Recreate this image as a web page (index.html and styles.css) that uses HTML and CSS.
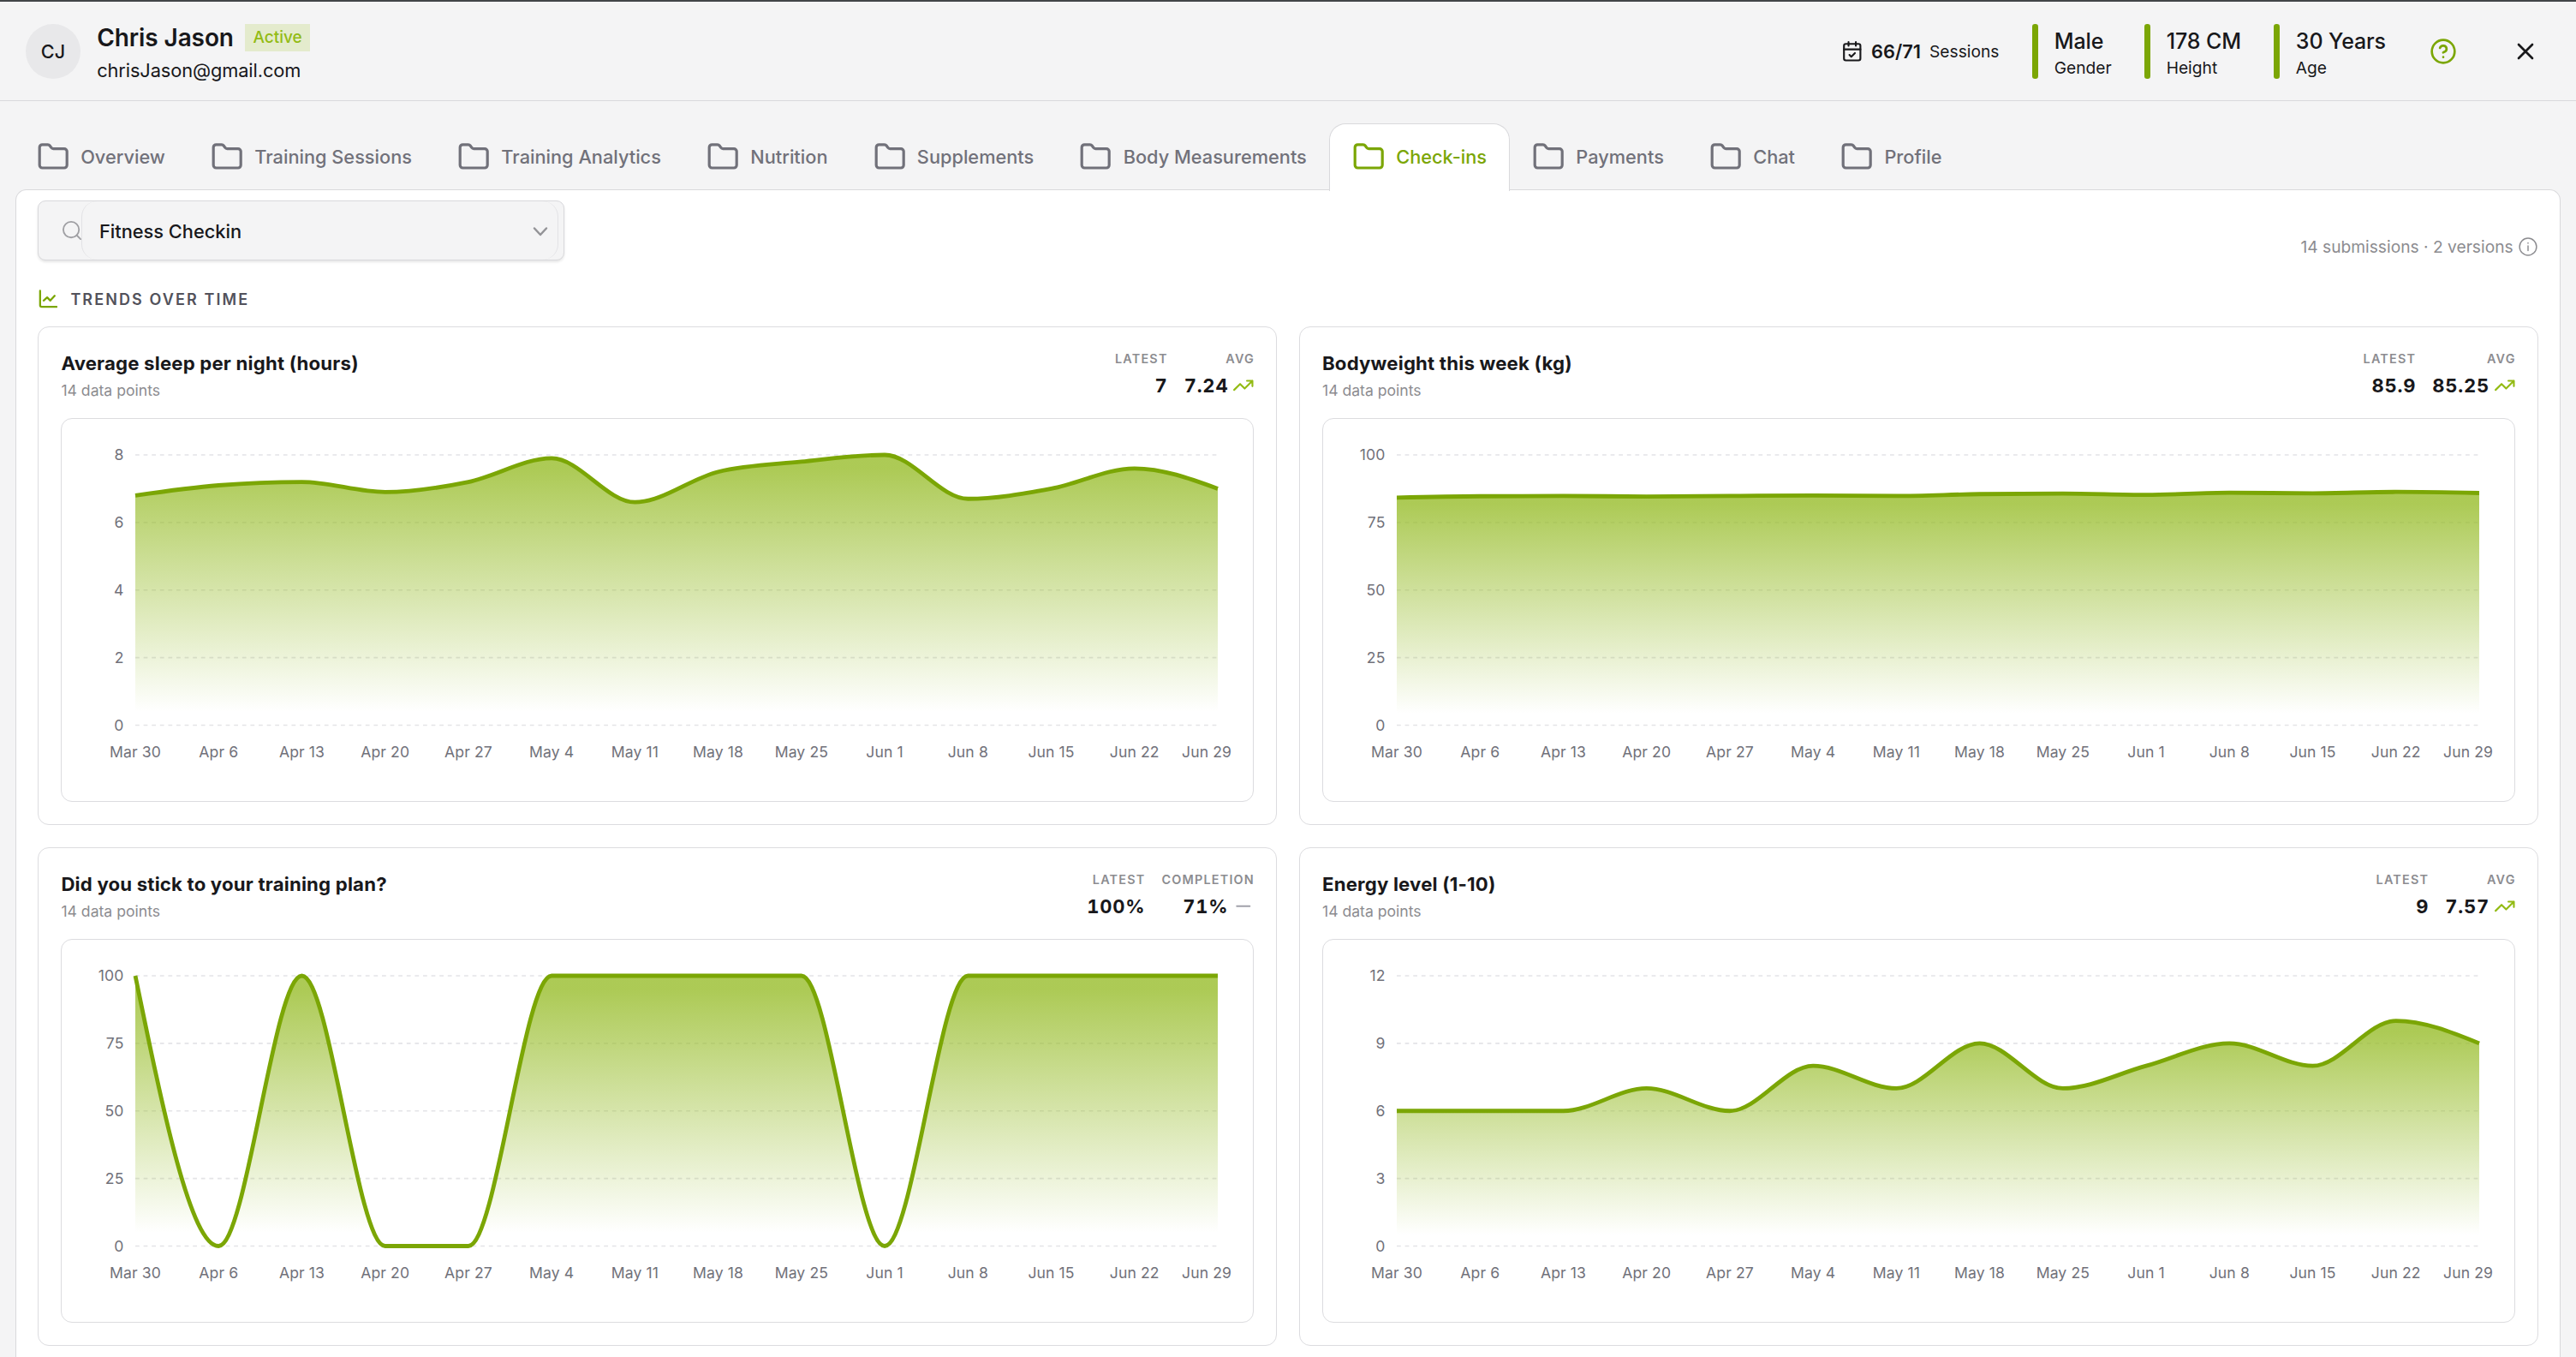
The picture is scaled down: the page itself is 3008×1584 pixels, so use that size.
FILE: index.html
```html
<!DOCTYPE html>
<html lang="en">
<head>
<meta charset="utf-8">
<title>Client check-ins</title>
<link rel="stylesheet" href="styles.css">
</head>
<body>
<svg class="sprite" aria-hidden="true">
  <symbol id="folder" viewBox="0 0 24 24"><path d="M20 20a2 2 0 0 0 2-2V8a2 2 0 0 0-2-2h-7.9a2 2 0 0 1-1.69-.9L9.6 3.9A2 2 0 0 0 7.93 3H4a2 2 0 0 0-2 2v13a2 2 0 0 0 2 2Z"/></symbol>
  <symbol id="trend" viewBox="0 0 24 24"><path d="M22 7l-8.500 8.500-5-5L2 17M16 7h6v6"/></symbol>
  <symbol id="minus" viewBox="0 0 24 24"><path d="M5 12h14"/></symbol>
</svg>

<header class="topbar">
  <div class="avatar">CJ</div>
  <div class="person">
    <div class="person-row"><span class="name">Chris Jason</span><span class="badge">Active</span></div>
    <div class="email">chrisJason@gmail.com</div>
  </div>
  <div class="sessions">
    <svg class="icon" viewBox="0 0 24 24"><path d="M8 2v4M16 2v4M3 10h18M9 16l2 2 4-4"/><rect x="3" y="4" width="18" height="18" rx="2"/></svg>
    <b>66/71</b><span>Sessions</span>
  </div>
  <div class="facts">
    <div class="fact"><i></i><div><b>Male</b><span>Gender</span></div></div>
    <div class="fact"><i></i><div><b>178 CM</b><span>Height</span></div></div>
    <div class="fact"><i></i><div><b>30 Years</b><span>Age</span></div></div>
  </div>
  <svg class="icon help" viewBox="0 0 24 24"><circle cx="12" cy="12" r="10"/><path d="M9.090 9a3 3 0 0 1 5.830 1c0 2-3 3-3 3M12 17h.01"/></svg>
  <svg class="icon close" viewBox="0 0 24 24"><path d="M18 6 6 18M6 6l12 12"/></svg>
</header>

<nav class="tabs">
  <a class="tab"><svg class="icon"><use href="#folder"/></svg>Overview</a>
  <a class="tab"><svg class="icon"><use href="#folder"/></svg>Training Sessions</a>
  <a class="tab"><svg class="icon"><use href="#folder"/></svg>Training Analytics</a>
  <a class="tab"><svg class="icon"><use href="#folder"/></svg>Nutrition</a>
  <a class="tab"><svg class="icon"><use href="#folder"/></svg>Supplements</a>
  <a class="tab"><svg class="icon"><use href="#folder"/></svg>Body Measurements</a>
  <a class="tab active"><svg class="icon"><use href="#folder"/></svg>Check-ins</a>
  <a class="tab"><svg class="icon"><use href="#folder"/></svg>Payments</a>
  <a class="tab"><svg class="icon"><use href="#folder"/></svg>Chat</a>
  <a class="tab"><svg class="icon"><use href="#folder"/></svg>Profile</a>
</nav>

<main class="panel">
  <div class="toolbar">
    <div class="picker">
      <svg class="icon search" viewBox="0 0 24 24"><circle cx="11" cy="11" r="10"/><path d="M23 23l-5-5"/></svg>
      <div class="picker-value">Fitness Checkin<svg class="icon chevron" viewBox="0 0 24 24"><path d="M5 8.500l7 7.500 7-7.500"/></svg></div>
    </div>
    <div class="summary">14 submissions · 2 versions
      <svg class="icon" viewBox="0 0 24 24"><circle cx="12" cy="12" r="10.800"/><path d="M12 11v6M12 7.200v.4"/></svg>
    </div>
  </div>
  <h2 class="section"><svg class="icon" viewBox="0 0 24 24"><path d="M2 1.500v18.500a2 2 0 0 0 2 2h19M6.500 14l4.500-4 4 4L20.500 8"/></svg>TRENDS OVER TIME</h2>

  <div class="grid">
    <section class="card">
      <div class="card-head">
        <div class="titles"><h3>Average sleep per night (hours)</h3><p>14 data points</p></div>
        <div class="stat"><small>LATEST</small><b>7</b></div>
        <div class="stat"><small>AVG</small><b>7.24<svg class="icon up"><use href="#trend"/></svg></b></div>
      </div>
      <div class="plot" data-max="8" data-values="6.8,7.1,7.2,6.9,7.2,7.9,6.6,7.5,7.8,8,6.7,7,7.6,7"></div>
    </section>
    <section class="card">
      <div class="card-head">
        <div class="titles"><h3>Bodyweight this week (kg)</h3><p>14 data points</p></div>
        <div class="stat"><small>LATEST</small><b>85.9</b></div>
        <div class="stat"><small>AVG</small><b>85.25<svg class="icon up"><use href="#trend"/></svg></b></div>
      </div>
      <div class="plot" data-max="100" data-values="84.2,84.7,84.8,84.6,84.8,85,84.8,85.5,85.7,85.2,86,85.8,86.3,85.9"></div>
    </section>
    <section class="card">
      <div class="card-head">
        <div class="titles"><h3>Did you stick to your training plan?</h3><p>14 data points</p></div>
        <div class="stat"><small>LATEST</small><b>100%</b></div>
        <div class="stat"><small>COMPLETION</small><b>71%<svg class="icon flat"><use href="#minus"/></svg></b></div>
      </div>
      <div class="plot" data-max="100" data-values="100,0,100,0,0,100,100,100,100,0,100,100,100,100"></div>
    </section>
    <section class="card">
      <div class="card-head">
        <div class="titles"><h3>Energy level (1-10)</h3><p>14 data points</p></div>
        <div class="stat"><small>LATEST</small><b>9</b></div>
        <div class="stat"><small>AVG</small><b>7.57<svg class="icon up"><use href="#trend"/></svg></b></div>
      </div>
      <div class="plot" data-max="12" data-values="6,6,6,7,6,8,7,9,7,8,9,8,10,9"></div>
    </section>
  </div>
</main>
<script src="charts.js"></script>
</body>
</html>
```
FILE: styles.css
```css
* { box-sizing: border-box; margin: 0; padding: 0; }

body {
  display: flex;
  flex-direction: column;
  height: 100vh;
  overflow: hidden;
  background: #f4f4f5;
  border-top: 2px solid #424548;
  font-family: Inter, "Liberation Sans", sans-serif;
  color: #18181b;
}

b, h2, h3 { font-weight: 600; }
.sprite { display: none; }
.icon { fill: none; stroke: currentColor; stroke-width: 2; stroke-linecap: round; stroke-linejoin: round; flex: none; }

/* header */
.topbar { display: flex; flex: none; align-items: center; height: 116px; padding: 0 43px 0 30px; border-bottom: 1px solid #d9d9dc; }
.avatar { width: 64px; height: 64px; border-radius: 50%; background: #e8e8ea; display: flex; align-items: center; justify-content: center; font-size: 21.6px; font-weight: 500; }
.person { margin: 7px 0 0 19.2px; }
.person-row { display: flex; align-items: center; gap: 13px; height: 32px; }
.name { font-size: 28px; font-weight: 600; line-height: 32px; letter-spacing: -.1px; }
.badge { height: 32px; padding: 0 9.5px; background: #e4ebcd; color: #93bb14; font-size: 19px; font-weight: 500; line-height: 32px; }
.email { font-size: 21.8px; line-height: 32px; margin-top: 6px; letter-spacing: -.1px; }
.sessions { display: flex; align-items: center; margin-left: auto; font-size: 19.2px; }
.sessions .icon { width: 25.6px; height: 25.6px; margin-right: 10px; }
.sessions b { font-size: 21.8px; font-weight: 600; margin-right: 10px; }
.facts { display: flex; gap: 38.5px; margin-left: 39px; }
.fact { display: flex; gap: 19px; height: 64px; }
.fact i { width: 6.4px; border-radius: 3.2px; background: #7ba605; }
.fact b, .fact span { display: block; }
.fact b { font-size: 25px; font-weight: 500; line-height: 36px; margin-top: 2px; letter-spacing: -.1px; }
.fact span { font-size: 19.2px; line-height: 26px; }
.help { width: 32px; height: 32px; margin-left: 51px; color: #7ba605; }
.close { width: 32px; height: 32px; margin-left: 64px; }

/* tabs */
.tabs { display: flex; flex: none; padding: 26px 0 0 16.400px; position: relative; }
.tab { display: flex; align-items: center; gap: 12.8px; height: 79px; margin-bottom: -1px; padding: 0 25.6px 2px; border: 1px solid transparent; border-bottom: 0; color: #71717a; font-size: 21.75px; font-weight: 500; white-space: nowrap; }
.tab .icon { width: 38.4px; height: 38.4px; }
.tab.active { background: #fff; border-color: #d9d9dc; border-radius: 19.2px 19.2px 0 0; color: #7ba605; }

/* panel */
.panel { flex: 1; min-height: 0; margin: -1px 18.400px 0; padding: 12px 25px 0; background: #fff; border: 1px solid #d9d9dc; border-bottom: 0; border-radius: 12.8px 12.8px 0 0; }
.toolbar { display: flex; justify-content: space-between; height: 70px; }
.picker { display: flex; align-items: center; width: 615px; height: 70px; padding-right: 6px; background: #f4f4f5; border: 1px solid #d9d9dc; border-radius: 9px; box-shadow: 0 2px 3px rgba(0, 0, 0, .1); }
.search { width: 22px; height: 22px; margin: 0 0 0 28px; color: #9f9fa3; overflow: visible; }
.picker-value { flex: 1; display: flex; align-items: center; justify-content: space-between; height: 68px; padding: 1px 8px 0 19.5px; border-left: 1px solid #e2e2e5; border-right: 1px solid #e2e2e5; border-radius: 18px; font-size: 21.8px; font-weight: 500; }
.chevron { width: 24px; height: 24px; color: #939397; stroke-width: 2.500; }
.summary { display: flex; align-items: center; gap: 6px; height: 24px; margin: 42px 1px 0 0; font-size: 19.2px; color: #8c8c90; }
.summary .icon { width: 22px; height: 22px; stroke-width: 1.600; }
.section { display: flex; align-items: center; gap: 15px; height: 26px; margin: 32px 0 19px 1px; font-size: 18px; letter-spacing: 2.1px; color: #52525b; }
.section .icon { width: 22px; height: 22px; color: #7ba605; stroke-width: 2.500; }

/* trend cards */
.grid { display: grid; grid-template-columns: 1fr 1fr; gap: 26px; }
.card { height: 582px; padding: 26px; border: 1px solid #dcdcdf; border-radius: 13px; }
.card-head { display: flex; height: 80px; gap: 19px; padding-top: 1px; margin-right: -1px; text-align: right; }
.titles { flex: 1; margin-top: -1px; text-align: left; }
h3 { font-size: 22.2px; font-weight: 700; line-height: 32px; letter-spacing: .18px; }
.titles p { font-size: 17.6px; line-height: 24px; margin-top: 3.5px; color: #8c8c90; }
.stat small { display: block; font-size: 14.4px; font-weight: 600; line-height: 20px; letter-spacing: 1.2px; color: #8c8c90; }
.stat b { display: flex; align-items: center; justify-content: flex-end; gap: 5px; height: 32px; margin-top: 5px; font-size: 22px; font-weight: 700; font-variant-numeric: tabular-nums; letter-spacing: .8px; }
.stat .icon { width: 25.6px; height: 25.6px; }
.up { color: #93bb14; }
.flat { color: #a1a1aa; }

.plot { height: 448px; border: 1px solid #dcdcdf; border-radius: 13px; }
.plot svg { display: block; width: 100%; height: 100%; }
.plot text { font-size: 17.6px; fill: #71717a; letter-spacing: .1px; }
.plot .rule { stroke: #e4e4e7; stroke-width: 1.600; stroke-dasharray: 4.8 4.8; }
.plot .line { fill: none; stroke: #7ba605; stroke-width: 4.8; }
```
FILE: charts.js
```js
const labels = ['Mar 30', 'Apr 6', 'Apr 13', 'Apr 20', 'Apr 27', 'May 4', 'May 11', 'May 18', 'May 25', 'Jun 1', 'Jun 8', 'Jun 15', 'Jun 22', 'Jun 29'];
const box = { left: 86, right: 1350, top: 42, bottom: 357.5 };

// Monotone cubic interpolation through evenly spaced points
function monotonePath(points) {
  const n = points.length;
  const h = points[1][0] - points[0][0];
  const slopes = [];
  for (let i = 0; i < n - 1; i++) slopes.push((points[i + 1][1] - points[i][1]) / h);
  const t = new Array(n);
  for (let i = 1; i < n - 1; i++) {
    const a = slopes[i - 1], b = slopes[i];
    t[i] = (Math.sign(a) + Math.sign(b)) * Math.min(Math.abs(a), Math.abs(b), 0.5 * Math.abs((a + b) / 2)) || 0;
  }
  t[0] = (3 * slopes[0] - t[1]) / 2;
  t[n - 1] = (3 * slopes[n - 2] - t[n - 2]) / 2;
  let d = `M${points[0][0]},${points[0][1]}`;
  for (let i = 0; i < n - 1; i++) {
    const [x0, y0] = points[i], [x1, y1] = points[i + 1];
    d += `C${x0 + h / 3},${y0 + t[i] * h / 3} ${x1 - h / 3},${y1 - t[i + 1] * h / 3} ${x1},${y1}`;
  }
  return d;
}

document.querySelectorAll('.plot').forEach((el, index) => {
  const max = Number(el.dataset.max);
  const step = (box.right - box.left) / 13;
  const points = el.dataset.values.split(',').map((v, i) => [
    box.left + i * step,
    box.bottom - (v / max) * (box.bottom - box.top)
  ]);
  const path = monotonePath(points);
  let rules = '', texts = '';
  for (let i = 0; i <= 4; i++) {
    const y = box.bottom - i * (box.bottom - box.top) / 4;
    rules += `<line class="rule" x1="${box.left}" x2="${box.right}" y1="${y}" y2="${y}"/>`;
    texts += `<text x="72.500" y="${y + 6.3}" text-anchor="end">${max * i / 4}</text>`;
  }
  labels.forEach((label, i) => {
    const x = i === 13 ? 1337 : box.left + i * step;
    texts += `<text x="${x}" y="395" text-anchor="middle">${label}</text>`;
  });
  el.innerHTML = `<svg viewBox="0 0 1390.6 446" preserveAspectRatio="xMinYMin meet">
    <defs><linearGradient id="fade${index}" x1="0" y1="0" x2="0" y2="1">
      <stop offset="5%" stop-color="#98bd2b" stop-opacity=".8"/>
      <stop offset="95%" stop-color="#98bd2b" stop-opacity="0"/>
    </linearGradient></defs>
    ${rules}
    <path d="${path}L${box.right},${box.bottom}L${box.left},${box.bottom}Z" fill="url(#fade${index})"/>
    <path class="line" d="${path}"/>
    ${texts}
  </svg>`;
});
```
